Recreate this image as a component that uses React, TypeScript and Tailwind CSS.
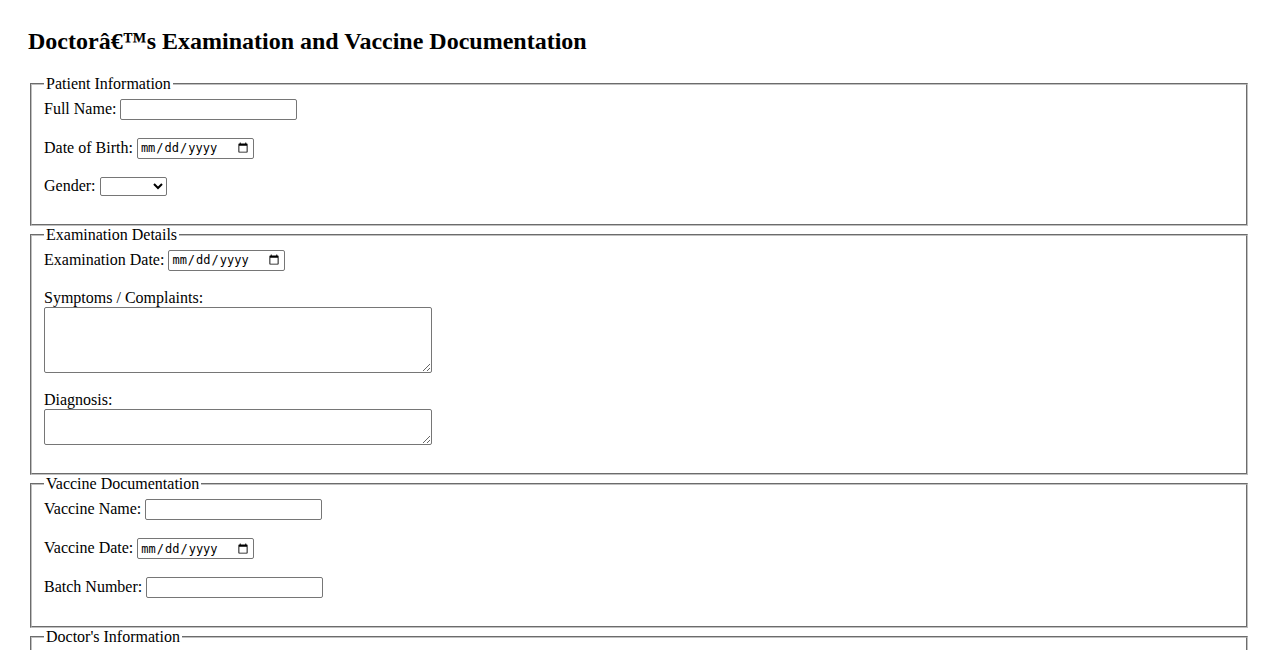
import React from "react";

const fieldsetCls =
  "mx-[2px] [border:2px_groove_rgb(192,192,192)] pt-[5.6px] px-[12px] pb-[10px] min-w-min";
const legendCls = "px-[2px]";
const textInputCls =
  "w-[177px] h-[21px] border border-[#767676] rounded-[2px] px-[2px] py-[1px] bg-white text-[13.333px] font-['Liberation_Sans',Arial,sans-serif] text-black";
const dateInputCls =
  "w-[117px] h-[21.5px] border border-[#767676] rounded-[2px] pl-[2px] pr-[2px] py-[1px] bg-white text-[12px] font-['DejaVu_Sans_Mono',monospace] text-black";
const selectCls =
  "w-[67px] h-[19px] border border-[#767676] rounded-[2px] bg-white text-[13.333px] font-['Liberation_Sans',Arial,sans-serif] text-black";
const textareaCls =
  "w-[388px] align-top border border-[#767676] rounded-[2px] p-[2px] bg-white text-[13.333px] font-['DejaVu_Sans_Mono',monospace] text-black";

export default function App() {
  return (
    <div className="px-[28px] pt-[8px] pb-[28px] bg-white text-black font-['Liberation_Serif','Times_New_Roman',serif] text-[16px] leading-[normal] min-h-screen">
      <h2 className="mt-[20px] mb-[20px] text-[24px] font-bold leading-[normal]">
        Doctorâ€™s Examination and Vaccine Documentation
      </h2>
      <form>
        <fieldset className={fieldsetCls}>
          <legend className={legendCls}>Patient Information</legend>
          <label htmlFor="fullName">Full Name:</label>{" "}
          <input id="fullName" type="text" className={textInputCls} />
          <br />
          <br />
          <label htmlFor="dob">Date of Birth:</label>{" "}
          <input id="dob" type="date" className={dateInputCls} />
          <br />
          <br />
          <label htmlFor="gender">Gender:</label>{" "}
          <select id="gender" className={selectCls} defaultValue="">
            <option value=""></option>
            <option value="male">Male</option>
            <option value="female">Female</option>
            <option value="other">Other</option>
          </select>
          <br />
          <br />
        </fieldset>

        <fieldset className={fieldsetCls}>
          <legend className={legendCls}>Examination Details</legend>
          <label htmlFor="examDate">Examination Date:</label>{" "}
          <input id="examDate" type="date" className={dateInputCls} />
          <br />
          <br />
          <label htmlFor="symptoms">Symptoms / Complaints:</label>
          <br />
          <textarea id="symptoms" className={textareaCls + " h-[66px]"} />
          <br />
          <br />
          <label htmlFor="diagnosis">Diagnosis:</label>
          <br />
          <textarea id="diagnosis" className={textareaCls + " h-[36px]"} />
          <br />
          <br />
        </fieldset>

        <fieldset className={fieldsetCls}>
          <legend className={legendCls}>Vaccine Documentation</legend>
          <label htmlFor="vaccineName">Vaccine Name:</label>{" "}
          <input id="vaccineName" type="text" className={textInputCls} />
          <br />
          <br />
          <label htmlFor="vaccineDate">Vaccine Date:</label>{" "}
          <input id="vaccineDate" type="date" className={dateInputCls} />
          <br />
          <br />
          <label htmlFor="batch">Batch Number:</label>{" "}
          <input id="batch" type="text" className={textInputCls} />
          <br />
          <br />
        </fieldset>

        <fieldset className={fieldsetCls}>
          <legend className={legendCls}>Doctor's Information</legend>
          <label htmlFor="doctorName">Doctor Name:</label>{" "}
          <input id="doctorName" type="text" className={textInputCls} />
          <br />
          <br />
          <label htmlFor="license">License Number:</label>{" "}
          <input id="license" type="text" className={textInputCls} />
          <br />
          <br />
          <label htmlFor="signature">Signature:</label>{" "}
          <input id="signature" type="text" className={textInputCls} />
          <br />
          <br />
        </fieldset>
        <br />
        <button
          type="submit"
          className="border border-[#767676] rounded-[2px] bg-[#efefef] px-[6px] py-[1px] text-[13.333px] font-['Liberation_Sans',Arial,sans-serif]"
        >
          Submit
        </button>
      </form>
    </div>
  );
}
